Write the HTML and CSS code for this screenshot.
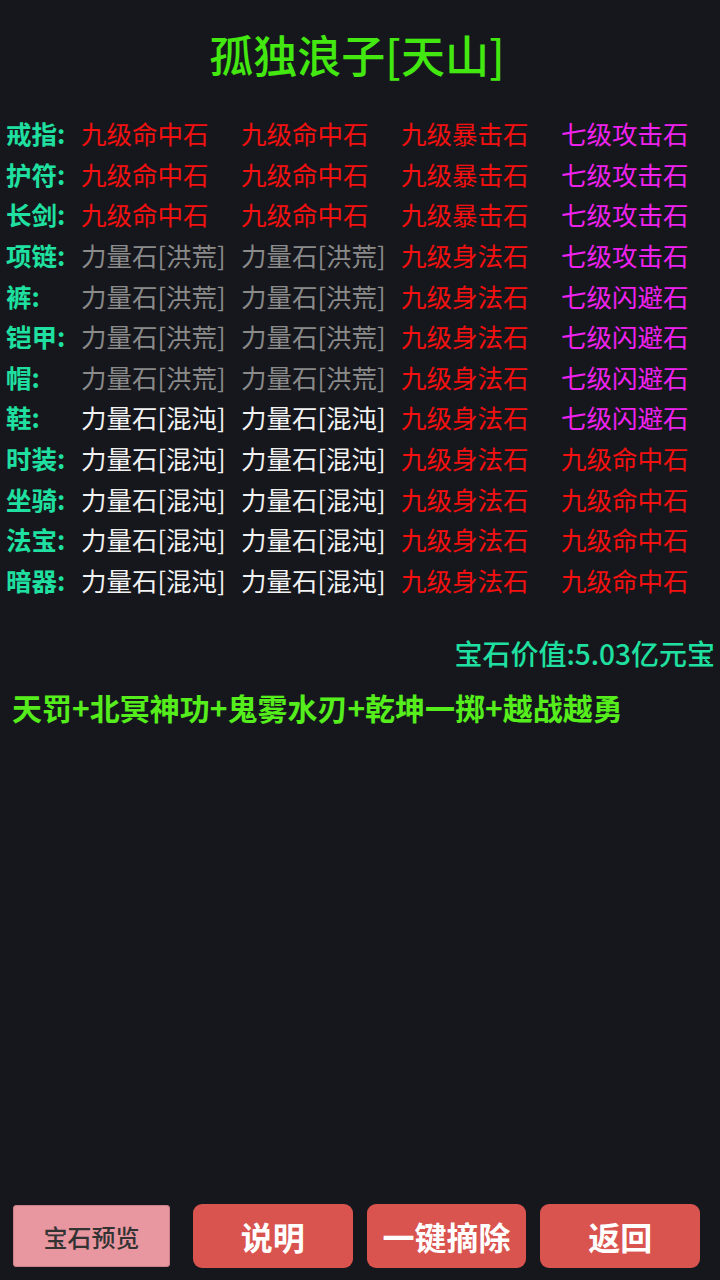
FILE: index.html
```html
<!DOCTYPE html>
<html lang="zh-CN">
<head>
<meta charset="UTF-8" />
<meta name="viewport" content="width=device-width, initial-scale=1" />
<title>宝石预览</title>
<link rel="stylesheet" href="styles.css">
</head>
<body>
  <div class="page">
    <h1 class="title">孤独浪子[天山]</h1>

    <div class="gems">
      <span class="slot">戒指:</span><span class="red">九级命中石</span><span class="red">九级命中石</span><span class="red">九级暴击石</span><span class="pink">七级攻击石</span>
      <span class="slot">护符:</span><span class="red">九级命中石</span><span class="red">九级命中石</span><span class="red">九级暴击石</span><span class="pink">七级攻击石</span>
      <span class="slot">长剑:</span><span class="red">九级命中石</span><span class="red">九级命中石</span><span class="red">九级暴击石</span><span class="pink">七级攻击石</span>
      <span class="slot">项链:</span><span class="grey">力量石[洪荒]</span><span class="grey">力量石[洪荒]</span><span class="red">九级身法石</span><span class="pink">七级攻击石</span>
      <span class="slot">裤:</span><span class="grey">力量石[洪荒]</span><span class="grey">力量石[洪荒]</span><span class="red">九级身法石</span><span class="pink">七级闪避石</span>
      <span class="slot">铠甲:</span><span class="grey">力量石[洪荒]</span><span class="grey">力量石[洪荒]</span><span class="red">九级身法石</span><span class="pink">七级闪避石</span>
      <span class="slot">帽:</span><span class="grey">力量石[洪荒]</span><span class="grey">力量石[洪荒]</span><span class="red">九级身法石</span><span class="pink">七级闪避石</span>
      <span class="slot">鞋:</span><span class="white">力量石[混沌]</span><span class="white">力量石[混沌]</span><span class="red">九级身法石</span><span class="pink">七级闪避石</span>
      <span class="slot">时装:</span><span class="white">力量石[混沌]</span><span class="white">力量石[混沌]</span><span class="red">九级身法石</span><span class="red">九级命中石</span>
      <span class="slot">坐骑:</span><span class="white">力量石[混沌]</span><span class="white">力量石[混沌]</span><span class="red">九级身法石</span><span class="red">九级命中石</span>
      <span class="slot">法宝:</span><span class="white">力量石[混沌]</span><span class="white">力量石[混沌]</span><span class="red">九级身法石</span><span class="red">九级命中石</span>
      <span class="slot">暗器:</span><span class="white">力量石[混沌]</span><span class="white">力量石[混沌]</span><span class="red">九级身法石</span><span class="red">九级命中石</span>
    </div>

    <div class="value">宝石价值:5.03亿元宝</div>
    <div class="skills">天罚+北冥神功+鬼雾水刃+乾坤一掷+越战越勇</div>

    <div class="spacer"></div>

    <div class="actions">
      <button class="btn btn-preview">宝石预览</button>
      <button class="btn">说明</button>
      <button class="btn">一键摘除</button>
      <button class="btn">返回</button>
    </div>
  </div>
</body>
</html>
```

FILE: styles.css
```css
html, body {
  margin: 0;
  height: 100%;
}

body {
  background: #16171c;
  font-family: "Noto Sans CJK SC", "Noto Sans", sans-serif;
  color: #eee;
}

.page {
  height: 1280px;
  display: flex;
  flex-direction: column;
  box-sizing: border-box;
}

.title {
  margin: 26px 0 0;
  text-align: center;
  font-size: 44px;
  font-weight: 500;
  line-height: 56px;
  color: #44e811;
  padding-right: 6px;
}

.gems {
  margin-top: 31px;
  padding-left: 6px;
  display: grid;
  grid-template-columns: 75px 160px 160px 160px auto;
  grid-auto-rows: 40.6px;
  align-items: center;
  font-size: 25.5px;
  line-height: 34px;
  white-space: nowrap;
}

.slot {
  color: #1fe0a0;
  font-weight: 700;
}

.red { color: #f21010; }
.pink { color: #ee22ee; }
.grey { color: #8a8a8a; }
.white { color: #f2f2f2; }

.value {
  margin-top: 36px;
  text-align: right;
  padding-right: 5px;
  font-size: 28px;
  line-height: 34px;
  font-weight: 500;
  color: #1fe0a0;
}

.skills {
  margin-top: 18px;
  padding-left: 12px;
  font-size: 30px;
  line-height: 38px;
  font-weight: 700;
  color: #55ee1c;
}

.spacer {
  flex: 1;
}

.actions {
  display: flex;
  gap: 14px;
  padding: 0 20px 12px 13px;
  align-items: center;
}

.btn {
  flex: 1;
  height: 64px;
  border: none;
  border-radius: 9px;
  background: #d9534f;
  color: #fff;
  font-family: inherit;
  font-size: 32px;
  font-weight: 700;
  padding: 0;
}

.btn-preview {
  flex: 0 0 157px;
  height: 62px;
  border-radius: 3px;
  margin-right: 9px;
  background: #e8969f;
  color: #333;
  font-size: 24px;
  font-weight: 500;
  border: 1px solid #c98088;
}
```
